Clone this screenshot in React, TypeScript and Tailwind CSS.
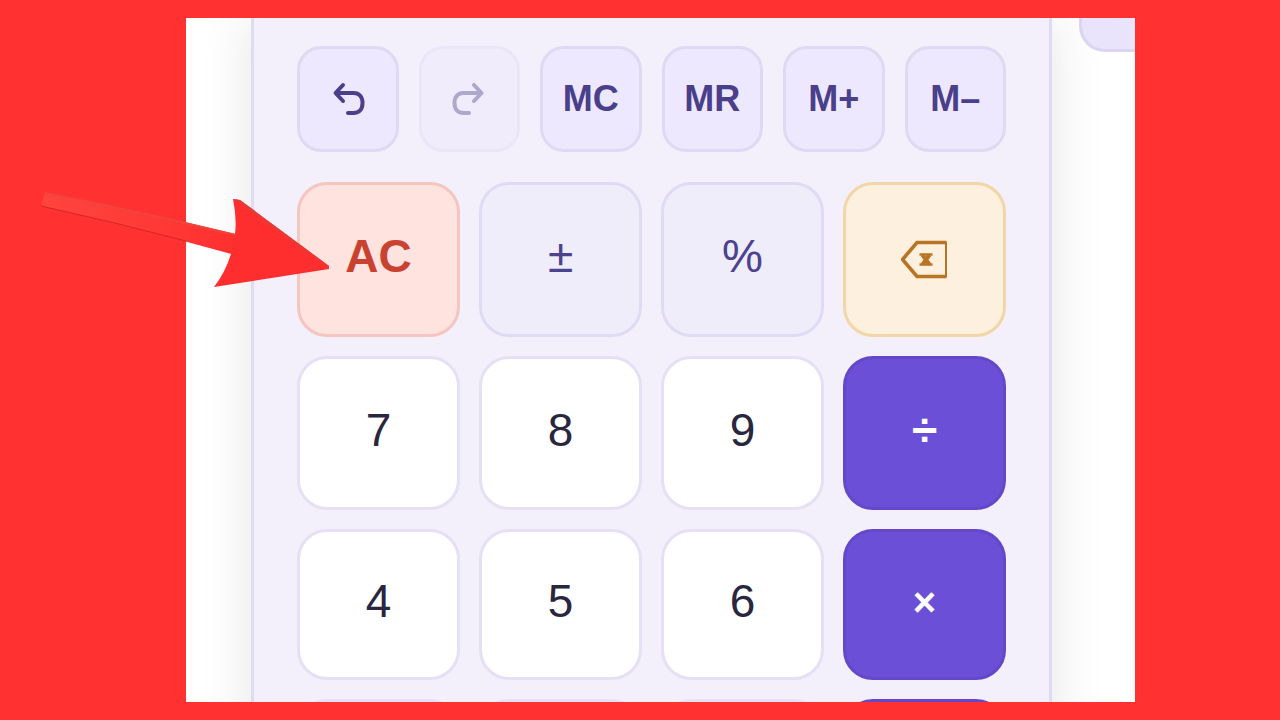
import type { ReactNode } from "react";

type Key = { name: string; tone: string; content?: ReactNode };

const digit = "border-[#e5e0f4] bg-white text-[46px] text-[#292640]";
const fn = "border-[#e0dbf5] bg-[#f0edfb] text-[46px] text-[#4b4290]";
const op = "border-[#6548c9] bg-[#6b4fd7] font-bold text-white";

function UndoIcon() {
  return (
    <svg
      viewBox="0 0 36 36"
      className="size-9"
      fill="none"
      stroke="currentColor"
      strokeWidth="4"
      strokeLinecap="round"
      strokeLinejoin="round"
      aria-hidden="true"
    >
      <path d="M13 4 5.500 12 13 20M6 12h17.500c6 0 9 4 9 10s-3 10-9 10H18" />
    </svg>
  );
}

function BackspaceIcon() {
  return (
    <svg viewBox="0 0 48 40" className="h-10 w-12" fill="none" stroke="currentColor" aria-hidden="true">
      <path d="M45.500 2.500H16L1.500 19.500 16 36.500h29.500" strokeWidth="3.600" />
      <path d="M45 2v35" strokeWidth="2" />
      <path d="M18.500 14.500h13M18.500 24.500h13" strokeWidth="2.600" />
      <path d="m21.500 15 7 9.500M28.500 15l-7 9.500" strokeWidth="4" />
    </svg>
  );
}

const memory = ["MC", "MR", "M+", "M–"];

const digits = (row: string[]): Key[] => row.map((d) => ({ name: d, tone: digit, content: d }));

const keys: Key[] = [
  { name: "All clear", tone: "border-[#f5c5c0] bg-[#fee3df] text-[46px] font-bold text-[#c9412f]", content: "AC" },
  { name: "Plus or minus", tone: fn, content: "±" },
  { name: "Percent", tone: fn, content: "%" },
  { name: "Backspace", tone: "border-[#f3d6a8] bg-[#fef0df] text-[#b87424]", content: <BackspaceIcon /> },
  ...digits(["7", "8", "9"]),
  { name: "Divide", tone: `${op} text-[46px]`, content: "÷" },
  ...digits(["4", "5", "6"]),
  { name: "Multiply", tone: `${op} text-[40px]`, content: "×" },
  { name: "1", tone: digit },
  { name: "2", tone: digit },
  { name: "3", tone: digit },
  { name: "Subtract", tone: op },
];

const memoryKey =
  "flex h-[106px] items-center justify-center rounded-3xl border-3 border-[#dfd9f4] bg-[#eee8fe] text-[36px] font-bold text-[#4a3f8a]";

function Arrow() {
  return (
    <svg
      viewBox="0 0 300 110"
      className="pointer-events-none absolute top-[185px] left-[36px] h-[110px] w-[300px]"
      aria-hidden="true"
    >
      <defs>
        <linearGradient id="shaft" x1="0" y1="0" x2="1" y2="0">
          <stop offset="0" stopColor="#ff443e" />
          <stop offset="0.6" stopColor="#ff3935" />
          <stop offset="1" stopColor="#ff2f2f" />
        </linearGradient>
      </defs>
      <path d="M9 7Q105 26 203 50l-4 20Q102 43 5 21Z" fill="url(#shaft)" />
      <path d="M9 8Q105 27 200 50" fill="none" stroke="#f0443d" strokeWidth="2" />
      <path d="M5 21Q78 37 150 56" fill="none" stroke="#d42525" strokeWidth="1" />
      <path d="m197 14 7 1 89 66v3l-115 18q11-14 17-33l4-20q2-16-2-35Z" fill="#ff2e2e" />
      <path d="m198 14 6 1 89 66v2L202 18Z" fill="#e83a35" />
    </svg>
  );
}

export default function App() {
  return (
    <main className="relative flex h-screen overflow-hidden bg-[#ff3131] py-[18px] pr-[145px] pl-[186px] font-['Liberation_Sans',Arial,sans-serif]">
      <div className="relative flex flex-1 items-start overflow-hidden bg-white pr-[83px] pl-[65px]">
        <section
          aria-label="Calculator"
          className="flex flex-1 flex-col gap-[30px] border-x-3 border-[#dfdbf3] bg-[#f3f0fb] px-[43px] pt-7 pb-10 shadow-[0_0_48px_rgba(40,40,60,0.12)]"
        >
          <div className="grid grid-cols-6 gap-5">
            <button type="button" aria-label="Undo" className={memoryKey}>
              <UndoIcon />
            </button>
            <button type="button" aria-label="Redo" disabled className={`${memoryKey} opacity-40`}>
              <span className="-scale-x-100">
                <UndoIcon />
              </span>
            </button>
            {memory.map((label) => (
              <button key={label} type="button" className={memoryKey}>
                {label}
              </button>
            ))}
          </div>
          <div className="grid grid-cols-4 grid-rows-[155px_154px_151px_154px] gap-[19px]">
            {keys.map((key) => (
              <button
                key={key.name}
                type="button"
                aria-label={key.name}
                className={`flex items-center justify-center rounded-[30px] border-3 ${
                  typeof key.content === "string" ? "pb-1.5" : ""
                } ${key.tone}`}
              >
                {key.content}
              </button>
            ))}
          </div>
        </section>
        <div className="absolute top-0 right-0 h-[34px] w-[56px] rounded-bl-[26px] border-b-3 border-l-3 border-[#dcd5f2] bg-[#e9e4fb]" />
      </div>
      <Arrow />
    </main>
  );
}
